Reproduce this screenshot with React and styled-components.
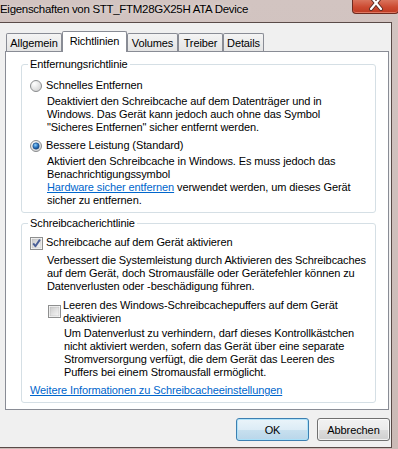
import React, { useId } from "react";
import styled, { createGlobalStyle } from "styled-components";

const GlobalStyle = createGlobalStyle`
  html, body { margin: 0; padding: 0; background: #c9b8b4; }
  body { font-family: "Liberation Sans", Arial, sans-serif; }
`;

const Window = styled.div`
  width: 398px;
  height: 449px;
  overflow: hidden;
  display: flex;
  flex-direction: column;
  background: linear-gradient(180deg, #d2c4c1 0%, #cbbab6 100%);
  font-family: "Liberation Sans", Arial, sans-serif;
  font-size: 11px;
  letter-spacing: -0.1px;
  color: #000;
`;

const TitleBar = styled.div`
  height: 22px;
  flex: none;
  display: flex;
  justify-content: space-between;
  align-items: flex-start;
`;

const Title = styled.div`
  font-size: 11.5px;
  letter-spacing: -0.3px;
  line-height: 14px;
  padding-top: 2px;
  white-space: nowrap;
  text-shadow: 0 0 5px rgba(255, 255, 255, 0.6);
`;

const CloseButton = styled.div`
  width: 47px;
  height: 14px;
  margin-right: -1px;
  box-sizing: border-box;
  border: 1px solid #6e2a1f;
  border-top: none;
  border-radius: 0 0 4px 4px;
  background: linear-gradient(180deg, #d9735c 0%, #cc4a31 55%, #bd3a22 100%);
  box-shadow: inset 0 -1px 0 rgba(255, 180, 160, 0.5);
  display: flex;
  justify-content: center;
  align-items: flex-start;
  overflow: hidden;
`;

const Client = styled.div`
  width: 392px;
  height: 426px;
  box-sizing: border-box;
  flex: none;
  background: #f0f0f0;
  border-top: 1px solid #5a4b48;
  border-right: 1px solid #5a4b48;
  border-bottom: 1px solid #5a4b48;
  padding: 8px 2px 0 5px;
  display: flex;
  flex-direction: column;
`;

const TabStrip = styled.div`
  height: 20px;
  flex: none;
  display: flex;
  align-items: flex-end;
  padding-left: 1px;
`;

const Tab = styled.div`
  box-sizing: border-box;
  flex: none;
  width: ${(p) => p.$w}px;
  height: ${(p) => (p.$active ? 21 : 18)}px;
  margin-bottom: ${(p) => (p.$active ? -1 : 0)}px;
  position: relative;
  z-index: ${(p) => (p.$active ? 1 : 0)};
  border: 1px solid #898c95;
  border-bottom: none;
  border-radius: 2px 2px 0 0;
  background: ${(p) =>
    p.$active ? "#ffffff" : "linear-gradient(180deg, #f4f4f4 0%, #ececec 50%, #e4e4e4 100%)"};
  text-align: center;
  line-height: 13px;
  padding-top: ${(p) => (p.$active ? 2.5 : 3)}px;
  white-space: nowrap;
`;

const Panel = styled.div`
  box-sizing: border-box;
  width: 384px;
  height: 359px;
  flex: none;
  background: #ffffff;
  border: 1px solid #898c95;
  padding: 6px 0 0 15px;
  display: flex;
  flex-direction: column;
  gap: 4px;
`;

const Group = styled.fieldset`
  margin: 0;
  min-width: 0;
  width: 355px;
  box-sizing: border-box;
  border: 1px solid #d5dfe5;
  border-radius: 3px;
  padding: ${(p) => p.$pt}px 0 ${(p) => p.$pb}px 8px;
`;

const Legend = styled.legend`
  padding: 0 2px;
  margin-left: -2px;
  line-height: 13px;
`;

const Option = styled.div`
  display: grid;
  grid-template-columns: ${(p) => p.$col}px auto;
  margin-top: ${(p) => p.$mt || 0}px;
  margin-left: ${(p) => p.$indent || 0}px;
`;

const Indicator = styled.div`
  grid-row: 1;
  grid-column: 1;
  align-self: ${(p) => (p.$center ? "center" : "start")};
  padding-top: ${(p) => (p.$center ? 0 : 1)}px;
  line-height: 0;
`;

const Label = styled.div`
  grid-row: 1;
  grid-column: 2;
  line-height: 13px;
  white-space: nowrap;
`;

const Desc = styled.div`
  grid-row: 2;
  grid-column: 2;
  margin-top: ${(p) => p.$mt}px;
  padding-left: 1px;
  line-height: 13px;
  white-space: nowrap;
`;

const Link = styled.a`
  color: #0066cc;
  text-decoration: underline;
  cursor: pointer;
`;

const LinkLine = styled.div`
  margin-top: ${(p) => p.$mt}px;
  line-height: 13px;
  white-space: nowrap;
`;

const ButtonRow = styled.div`
  display: flex;
  justify-content: flex-end;
  gap: 8px;
  margin-top: 8px;
  margin-right: -1px;
`;

const Button = styled.button`
  width: 73px;
  height: 23px;
  box-sizing: border-box;
  padding: 0;
  font-family: inherit;
  font-size: 11px;
  letter-spacing: -0.1px;
  color: #000;
  border: 1px solid ${(p) => (p.$default ? "#3c7fb1" : "#707070")};
  border-radius: 3px;
  background: ${(p) =>
    p.$default
      ? "linear-gradient(180deg, #eaf4fa 0%, #dcecf6 50%, #c8e0ef 51%, #b9d6ea 100%)"
      : "linear-gradient(180deg, #f2f2f2 0%, #ebebeb 50%, #dddddd 51%, #cfcfcf 100%)"};
  box-shadow: inset 0 0 0 1px ${(p) => (p.$default ? "rgba(170, 225, 250, 0.9)" : "rgba(255, 255, 255, 0.7)")};
`;

function Radio({ checked }) {
  const id = useId().replace(/:/g, "");
  return (
    <svg width="12" height="12" viewBox="0 0 12 12">
      <defs>
        <radialGradient id={`rg${id}`} cx="0.35" cy="0.3" r="0.8">
          <stop offset="0" stopColor="#ffffff" />
          <stop offset="1" stopColor="#d0d0d0" />
        </radialGradient>
        <radialGradient id={`rb${id}`} cx="0.4" cy="0.35" r="0.7">
          <stop offset="0" stopColor="#8fd0fb" />
          <stop offset="0.55" stopColor="#2a74c0" />
          <stop offset="1" stopColor="#0d3c78" />
        </radialGradient>
      </defs>
      <circle cx="6" cy="6" r="5.5" fill={`url(#rg${id})`} stroke="#8a8c8e" />
      {checked && <circle cx="6" cy="6" r="3.2" fill={`url(#rb${id})`} stroke="#1f4d82" strokeWidth="0.6" />}
    </svg>
  );
}

function Check({ checked }) {
  const id = useId().replace(/:/g, "");
  return (
    <svg width="13" height="13" viewBox="0 0 13 13">
      <defs>
        <linearGradient id={`cg${id}`} x1="0" y1="0" x2="1" y2="1">
          <stop offset="0" stopColor="#cbcbcb" />
          <stop offset="1" stopColor="#f6f6f6" />
        </linearGradient>
      </defs>
      <rect x="0.5" y="0.5" width="12" height="12" fill="#ffffff" stroke="#8e8f8f" />
      <rect x="2" y="2" width="9" height="9" fill={`url(#cg${id})`} stroke="#b4b4b4" strokeWidth="0.5" />
      {checked && (
        <path d="M3.2 6.4 L5.4 9.2 L9.9 2.6" fill="none" stroke="#4a5f97" strokeWidth="1.9" strokeLinejoin="round" />
      )}
    </svg>
  );
}

const tabs = [
  { label: "Allgemein", w: 56 },
  { label: "Richtlinien", w: 65, active: true },
  { label: "Volumes", w: 51 },
  { label: "Treiber", w: 45 },
  { label: "Details", w: 41 },
];

export default function App() {
  return (
    <>
      <GlobalStyle />
      <Window>
        <TitleBar>
          <Title>Eigenschaften von STT_FTM28GX25H ATA Device</Title>
          <CloseButton>
            <svg width="14" height="12" viewBox="0 0 14 12">
              <path d="M2 -3 L12 9 M12 -3 L2 9" stroke="#5a2a22" strokeWidth="4" strokeLinecap="round" />
              <path d="M2 -3 L12 9 M12 -3 L2 9" stroke="#ffffff" strokeWidth="2.2" strokeLinecap="round" />
            </svg>
          </CloseButton>
        </TitleBar>
        <Client>
          <TabStrip>
            {tabs.map((t) => (
              <Tab key={t.label} $w={t.w} $active={t.active}>
                {t.label}
              </Tab>
            ))}
          </TabStrip>
          <Panel>
            <Group $pt={8} $pb={5}>
              <Legend>Entfernungsrichtlinie</Legend>
              <Option $col={16}>
                <Indicator>
                  <Radio />
                </Indicator>
                <Label>Schnelles Entfernen</Label>
                <Desc $mt={3}>
                  Deaktiviert den Schreibcache auf dem Datenträger und in
                  <br />
                  Windows. Das Gerät kann jedoch auch ohne das Symbol
                  <br />
                  "Sicheres Entfernen" sicher entfernt werden.
                </Desc>
              </Option>
              <Option $col={16} $mt={5}>
                <Indicator>
                  <Radio checked />
                </Indicator>
                <Label>Bessere Leistung (Standard)</Label>
                <Desc $mt={2.5}>
                  Aktiviert den Schreibcache in Windows. Es muss jedoch das
                  <br />
                  Benachrichtigungssymbol
                  <br />
                  <Link>Hardware sicher entfernen</Link> verwendet werden, um dieses Gerät
                  <br />
                  sicher zu entfernen.
                </Desc>
              </Option>
            </Group>
            <Group $pt={6} $pb={5}>
              <Legend>Schreibcacherichtlinie</Legend>
              <Option $col={16}>
                <Indicator>
                  <Check checked />
                </Indicator>
                <Label>Schreibcache auf dem Gerät aktivieren</Label>
                <Desc $mt={4}>
                  Verbessert die Systemleistung durch Aktivieren des Schreibcaches
                  <br />
                  auf dem Gerät, doch Stromausfälle oder Gerätefehler können zu
                  <br />
                  Datenverlusten oder -beschädigung führen.
                </Desc>
              </Option>
              <Option $col={15} $mt={6} $indent={18}>
                <Indicator $center>
                  <Check />
                </Indicator>
                <Label>
                  Leeren des Windows-Schreibcachepuffers auf dem Gerät
                  <br />
                  deaktivieren
                </Label>
                <Desc $mt={2.5}>
                  Um Datenverlust zu verhindern, darf dieses Kontrollkästchen
                  <br />
                  nicht aktiviert werden, sofern das Gerät über eine separate
                  <br />
                  Stromversorgung verfügt, die dem Gerät das Leeren des
                  <br />
                  Puffers bei einem Stromausfall ermöglicht.
                </Desc>
              </Option>
              <LinkLine $mt={4.5}>
                <Link>Weitere Informationen zu Schreibcacheeinstellungen</Link>
              </LinkLine>
            </Group>
          </Panel>
          <ButtonRow>
            <Button $default>OK</Button>
            <Button>Abbrechen</Button>
          </ButtonRow>
        </Client>
      </Window>
    </>
  );
}
